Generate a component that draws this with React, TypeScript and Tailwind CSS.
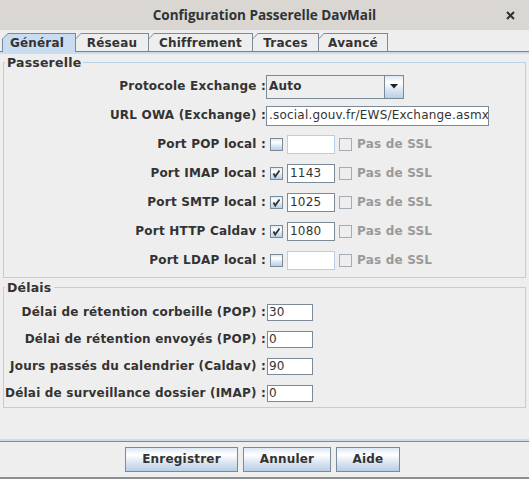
import React from "react";

const BTN_BG =
  "bg-[linear-gradient(to_bottom,#dde8f3_0%,#ffffff_30%,#dde8f3_60%,#b8cfe5_100%)]";

const tabs = [
  { label: "Général", w: "w-[74px]", selected: true },
  { label: "Réseau", w: "w-[74px]", selected: false },
  { label: "Chiffrement", w: "w-[105px]", selected: false },
  { label: "Traces", w: "w-[67px]", selected: false },
  { label: "Avancé", w: "w-[70px]", selected: false },
];

const ports = [
  { label: "Port POP local :", checked: false, value: "" },
  { label: "Port IMAP local :", checked: true, value: "1143" },
  { label: "Port SMTP local :", checked: true, value: "1025" },
  { label: "Port HTTP Caldav :", checked: true, value: "1080" },
  { label: "Port LDAP local :", checked: false, value: "" },
];

const delays = [
  { label: "Délai de rétention corbeille (POP) :", value: "30" },
  { label: "Délai de rétention envoyés (POP) :", value: "0" },
  { label: "Jours passés du calendrier (Caldav) :", value: "90" },
  { label: "Délai de surveillance dossier (IMAP) :", value: "0" },
];

function CheckBox({ checked = false, disabled = false }: { checked?: boolean; disabled?: boolean }) {
  return (
    <span
      className={`flex h-[13px] w-[13px] shrink-0 items-center justify-center border ${
        disabled ? "border-[#a3adb8] bg-[#eeeeee]" : `border-[#7a8a99] ${BTN_BG}`
      }`}
    >
      {checked && (
        <svg width="11" height="11" viewBox="0 0 11 11">
          <path d="M2.5 5.5 L4.2 8.5 L8.5 2.5" fill="none" stroke="#333333" strokeWidth="1.8" />
        </svg>
      )}
    </span>
  );
}

function Tab({ label, w, selected, first }: { label: string; w: string; selected: boolean; first: boolean }) {
  return (
    <div
      className={`${w} ${first ? "" : "-ml-px"} h-[19px] shrink-0 bg-[#7a8a99] px-[1px] pt-[1px] [clip-path:polygon(6px_0,100%_0,100%_100%,0_100%,0_6px)]`}
    >
      <div
        className={`flex h-full items-center justify-center [clip-path:polygon(5px_0,100%_0,100%_100%,0_100%,0_5px)] ${
          selected ? "bg-[#c8ddf2] pr-[4px]" : "border-b border-[#6382bf] bg-[#eeeeee] pt-px"
        }`}
      >
        {label}
      </div>
    </div>
  );
}

export default function App() {
  return (
    <div className="flex h-[479px] w-[529px] flex-col overflow-hidden bg-[#eeeeee] font-['DejaVu_Sans',sans-serif] text-[12px] font-bold leading-[15px] tracking-[0.2px] text-[#333333]">
      {/* title bar */}
      <div className="grid h-[30px] shrink-0 grid-cols-[1fr_auto_1fr] items-center bg-[#dad6d1] tracking-normal">
        <div />
        <div className="font-['Open_Sans',sans-serif] text-[13.5px] font-bold text-[#2e3436]">
          Configuration Passerelle DavMail
        </div>
        <div className="mr-[14px] flex justify-end">
          <svg width="9" height="9" viewBox="0 0 9 9">
            <path d="M1 1 L8 8 M8 1 L1 8" stroke="#2e3436" strokeWidth="2" />
          </svg>
        </div>
      </div>

      <div className="h-[3px] shrink-0" />

      {/* tabs */}
      <div className="flex h-[19px] shrink-0 items-end">
        <div className="h-full w-[2px] border-b border-[#6382bf]" />
        {tabs.map((t, i) => (
          <Tab key={t.label} {...t} first={i === 0} />
        ))}
        <div className="h-full flex-1 border-b border-[#6382bf]" />
      </div>
      <div className="h-[2px] shrink-0 bg-[#c8ddf2]" />

      {/* content */}
      <div className="flex flex-1 flex-col px-[3px]">
        <fieldset className="mt-[1px] border border-[#b8cfe5] px-0 pb-[2px] pt-[2px]">
          <legend className="ml-[1px] px-[2px] text-[12.5px]">Passerelle</legend>
          <div className="flex h-[29px] items-center">
            <div className="w-[262px] text-right">Protocole Exchange :</div>
            <div className="flex h-[24px] w-[138px] border border-[#7a8a99] bg-[#eeeeee]">
              <div className="flex flex-1 items-center pl-[2px]">Auto</div>
              <div className={`flex w-[19px] items-center justify-center border-l border-[#7a8a99] ${BTN_BG}`}>
                <svg width="8" height="5" viewBox="0 0 8 5">
                  <path d="M0 0 H8 L4 4.5 Z" fill="#222222" />
                </svg>
              </div>
            </div>
          </div>
          <div className="flex h-[29px] items-center">
            <div className="w-[262px] text-right">URL OWA (Exchange) :</div>
            <div className="flex h-[20px] w-[223px] items-center overflow-hidden whitespace-nowrap border border-[#7a8a99] bg-white pl-[2px] font-normal">
              .social.gouv.fr/EWS/Exchange.asmx
            </div>
          </div>
          {ports.map((p) => (
            <div key={p.label} className="flex h-[29px] items-center">
              <div className="w-[262px] text-right">{p.label}</div>
              <div className="ml-[4px]">
                <CheckBox checked={p.checked} />
              </div>
              <div
                className={`ml-[4px] flex h-[19px] w-[48px] items-center border bg-white pl-[2px] font-normal ${
                  p.checked ? "border-[#7a8a99]" : "border-[#b8cfe5]"
                }`}
              >
                {p.value}
              </div>
              <div className="ml-[4px]">
                <CheckBox disabled />
              </div>
              <div className="ml-[5px] text-[#999999]">Pas de SSL</div>
            </div>
          ))}
        </fieldset>

        <fieldset className="mt-[2px] border border-[#b8cfe5] px-0 pb-0 pt-[4px]">
          <legend className="ml-[1px] px-[2px] text-[12.5px]">Délais</legend>
          {delays.map((d) => (
            <div key={d.label} className="flex h-[27px] items-center">
              <div className="w-[262px] text-right">{d.label}</div>
              <div className="ml-[1px] flex h-[17px] w-[46px] items-center border border-[#7a8a99] bg-white pl-[1px] font-normal">
                {d.value}
              </div>
            </div>
          ))}
        </fieldset>
      </div>

      {/* separator */}
      <div className="h-[2px] shrink-0 bg-[#c8ddf2]" />
      <div className="h-[1px] shrink-0 bg-[#7a8a99]" />

      {/* buttons */}
      <div className="flex h-[35px] shrink-0 justify-center gap-[5px] pr-[4px] pt-[5px]">
        <button className={`h-[25px] w-[113px] border border-[#7a8a99] font-bold ${BTN_BG}`}>Enregistrer</button>
        <button className={`h-[25px] w-[88px] border border-[#7a8a99] font-bold ${BTN_BG}`}>Annuler</button>
        <button className={`h-[25px] w-[64px] border border-[#7a8a99] font-bold ${BTN_BG}`}>Aide</button>
      </div>
      <div className="h-[2px] shrink-0 bg-[#8e8e8e]" />
    </div>
  );
}
